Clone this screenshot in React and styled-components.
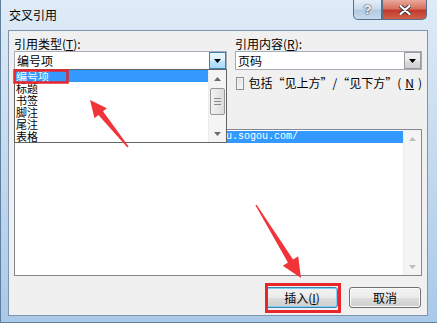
import React from 'react';
import styled, { createGlobalStyle } from 'styled-components';

const GlobalStyle = createGlobalStyle`
  html, body { margin: 0; padding: 0; background: #fff; }
  body { font-family: "Noto Sans CJK SC", "Liberation Sans", sans-serif; color: #000; }
`;

const Window = styled.div`
  position: relative;
  width: 437px;
  height: 323px;
  box-sizing: border-box;
  display: flex;
  flex-direction: column;
  padding: 0 9px 6px 7px;
  border-left: 1px solid #5f7f9f;
  border-bottom: 1px solid #5f7f9f;
  background: linear-gradient(to bottom, #dfebf7 0%, #cfe0f1 30%, #b9d3ec 70%, #a9c9e8 100%);
  overflow: hidden;
`;

const TitleBar = styled.div`
  height: 30px;
  display: flex;
  align-items: flex-start;
`;

const Title = styled.div`
  padding: 8px 0 0 1px;
  font-size: 12px;
  line-height: 14px;
  color: #000;
`;

const Caption = styled.div`
  margin-left: auto;
  margin-right: 1px;
  display: flex;
`;

const CaptionButton = styled.div`
  width: ${p => p.$w}px;
  height: 20px;
  box-sizing: border-box;
  display: flex;
  align-items: center;
  justify-content: center;
  border: 1px solid #5a6f8a;
  border-top: none;
  border-radius: ${p => (p.$close ? '0 0 5px 0' : '0 0 0 5px')};
  background: ${p =>
    p.$close
      ? 'linear-gradient(to bottom, #e9a99b 0%, #d8705f 45%, #c13a2b 55%, #d0604a 100%)'
      : 'linear-gradient(to bottom, #e4eef8 0%, #cbdcee 45%, #b3cbe3 55%, #c5daee 100%)'};
  color: #fff;
  font: bold 13px "Liberation Sans", sans-serif;
  text-shadow: 0 0 2px #333, 0 0 1px #333;
`;

const Client = styled.div`
  flex: 1;
  display: flex;
  flex-direction: column;
  background: #f0f0f0;
  border: 1px solid #7f95ad;
  padding: 5px 5px 7px 5px;
  font-size: 12px;
`;

const TopGrid = styled.div`
  display: grid;
  grid-template-columns: 213px 187px;
  column-gap: 8px;
  align-items: start;
`;

const Column = styled.div`
  display: flex;
  flex-direction: column;
`;

const Label = styled.div`
  line-height: 15px;
  height: 15px;
  white-space: nowrap;
`;

const Combo = styled.div`
  position: relative;
  height: 19px;
  box-sizing: border-box;
  display: flex;
  align-items: center;
  background: #fff;
  border: 1px solid #a6adb6;
  padding-left: 2px;
  line-height: 15px;
`;

const DropButton = styled.div`
  margin-left: auto;
  width: 17px;
  height: 17px;
  box-sizing: border-box;
  display: flex;
  align-items: center;
  justify-content: center;
  border: 1px solid ${p => (p.$hot ? '#3c7fb1' : '#9a9a9a')};
  background: ${p =>
    p.$hot
      ? 'linear-gradient(to bottom, #eaf6fd 0%, #d9f0fc 50%, #bee6fd 51%, #a7d9f5 100%)'
      : 'linear-gradient(to bottom, #f2f2f2 0%, #ebebeb 50%, #dddddd 51%, #cfcfcf 100%)'};
`;

const DropList = styled.div`
  position: absolute;
  top: 100%;
  left: -1px;
  width: 213px;
  height: 74px;
  box-sizing: border-box;
  display: flex;
  background: #fff;
  border: 1px solid #646464;
  z-index: 2;
`;

const Items = styled.div`
  flex: 1;
  display: flex;
  flex-direction: column;
`;

const Item = styled.div`
  height: 12px;
  line-height: 12px;
  padding-left: 1px;
  font-size: 11px;
  background: ${p => (p.$selected ? '#3399ff' : 'transparent')};
  color: ${p => (p.$selected ? '#fff' : '#000')};
  white-space: nowrap;
`;

const ScrollBar = styled.div`
  width: 17px;
  display: flex;
  flex-direction: column;
  background: #f4f4f4;
  border-left: 1px solid #ececec;
`;

const ScrollArrow = styled.div`
  height: 17px;
  display: flex;
  align-items: center;
  justify-content: center;
`;

const Track = styled.div`
  flex: 1;
  display: flex;
  flex-direction: column;
  padding: 0 1px;
`;

const Thumb = styled.div`
  height: 27px;
  margin-top: ${p => p.$offset}px;
  box-sizing: border-box;
  border: 1px solid #979797;
  border-radius: 2px;
  background: linear-gradient(to right, #f2f2f2, #dcdcdc);
  display: flex;
  flex-direction: column;
  align-items: center;
  justify-content: center;
  gap: 2px;
`;

const Grip = styled.div`
  width: 7px;
  height: 1px;
  background: #8a8a8a;
`;

const CheckRow = styled.div`
  display: flex;
  align-items: center;
  gap: 4px;
  height: 14px;
  margin-top: 6px;
  margin-left: 1px;
  white-space: nowrap;
  line-height: 14px;
`;

const CheckBox = styled.div`
  width: 13px;
  height: 13px;
  box-sizing: border-box;
  border: 1px solid #8f8f8f;
  background: linear-gradient(135deg, #dcdcdc, #fbfbfb);
  box-shadow: inset 0 0 0 1px #f4f4f4;
`;

/* room under the open drop list, where the dialog's hidden options sit */
const HiddenArea = styled.div`
  height: ${p => p.$h}px;
`;

const ListBox = styled.div`
  height: 147px;
  box-sizing: border-box;
  display: flex;
  background: #fff;
  border: 1px solid #828790;
`;

const ListRows = styled.div`
  flex: 1;
  padding-top: 1px;
`;

const ListRow = styled.div`
  height: 12px;
  line-height: 12px;
  background: #3399ff;
  color: #fff;
  font: 10px "Liberation Mono", monospace;
  padding-left: 211px;
  white-space: nowrap;
  overflow: hidden;
`;

const ButtonRow = styled.div`
  margin-top: 11px;
  display: flex;
  justify-content: flex-end;
  gap: 11px;
  padding-right: 1px;
`;

const Button = styled.div`
  width: 72px;
  height: 21px;
  box-sizing: border-box;
  display: flex;
  align-items: center;
  justify-content: center;
  border-radius: 3px;
  border: 1px solid ${p => (p.$default ? '#3c7fb1' : '#707070')};
  background: linear-gradient(to bottom, #f2f2f2 0%, #ebebeb 50%, #dddddd 51%, #cfcfcf 100%);
  box-shadow: ${p => (p.$default ? 'inset 0 0 0 1px #7ed0f6' : 'inset 0 0 0 1px #fcfcfc')};
  line-height: 14px;
`;

const Annotations = styled.svg`
  position: absolute;
  left: 0;
  top: 0;
  pointer-events: none;
  z-index: 5;
`;

const Tri = ({ dir = 'down', color = '#000' }) => (
  <svg width="7" height="4" viewBox="0 0 7 4">
    <path d={dir === 'down' ? 'M0 0H7L3.5 4Z' : 'M0 4H7L3.5 0Z'} fill={color} />
  </svg>
);

const types = ['编号项', '标题', '书签', '脚注', '尾注', '表格'];

export default function App() {
  return (
    <>
      <GlobalStyle />
      <Window>
        <TitleBar>
          <Title>交叉引用</Title>
          <Caption>
            <CaptionButton $w={29}>?</CaptionButton>
            <CaptionButton $w={45} $close>
              <svg width="12" height="10" viewBox="0 0 12 10">
                <path d="M1.5 1L10.5 9M10.5 1L1.5 9" stroke="#3b3b3b" strokeWidth="4" strokeLinecap="round" />
                <path d="M1.5 1L10.5 9M10.5 1L1.5 9" stroke="#fff" strokeWidth="2.2" strokeLinecap="round" />
              </svg>
            </CaptionButton>
          </Caption>
        </TitleBar>
        <Client>
          <TopGrid>
            <Column>
              <Label>引用类型(<u>T</u>):</Label>
              <Combo>
                编号项
                <DropButton $hot>
                  <Tri />
                </DropButton>
                <DropList>
                  <Items>
                    {types.map((t, i) => (
                      <Item key={t} $selected={i === 0}>{t}</Item>
                    ))}
                  </Items>
                  <ScrollBar>
                    <ScrollArrow><Tri dir="up" color="#6a6a6a" /></ScrollArrow>
                    <Track>
                      <Thumb $offset={1}>
                        <Grip /><Grip /><Grip />
                      </Thumb>
                    </Track>
                    <ScrollArrow><Tri color="#6a6a6a" /></ScrollArrow>
                  </ScrollBar>
                </DropList>
              </Combo>
              <HiddenArea $h={59} />
            </Column>
            <Column>
              <Label>引用内容(<u>R</u>):</Label>
              <Combo>
                页码
                <DropButton>
                  <Tri />
                </DropButton>
              </Combo>
              <CheckRow><CheckBox />包括“见上方”/“见下方”(<u>N</u>)</CheckRow>
            </Column>
          </TopGrid>
          <ListBox>
            <ListRows>
              <ListRow>u.sogou.com/</ListRow>
            </ListRows>
            <ScrollBar>
              <ScrollArrow><Tri dir="up" color="#bdbdbd" /></ScrollArrow>
              <Track />
              <ScrollArrow><Tri color="#bdbdbd" /></ScrollArrow>
            </ScrollBar>
          </ListBox>
          <ButtonRow>
            <Button $default>插入(<u>I</u>)</Button>
            <Button>取消</Button>
          </ButtonRow>
        </Client>
        <Annotations width="437" height="323" viewBox="0 0 437 323">
          <rect x="13.5" y="70.5" width="53" height="12" fill="none" stroke="#e8262b" strokeWidth="2.5" />
          <rect x="265.5" y="284.5" width="73" height="27" fill="none" stroke="#e8262b" strokeWidth="3" />
          <polygon
            points="89,100 105.9,108.2 102,111.3 127.6,146.6 126.4,147.4 97.4,115.1 93.5,118.2"
            fill="#f0343a"
          />
          <polygon
            points="300,278 297.2,256.3 292.1,259.4 255.6,204.7 254.4,205.3 286.9,262.6 281.8,265.7"
            fill="#f0343a"
          />
        </Annotations>
      </Window>
    </>
  );
}
